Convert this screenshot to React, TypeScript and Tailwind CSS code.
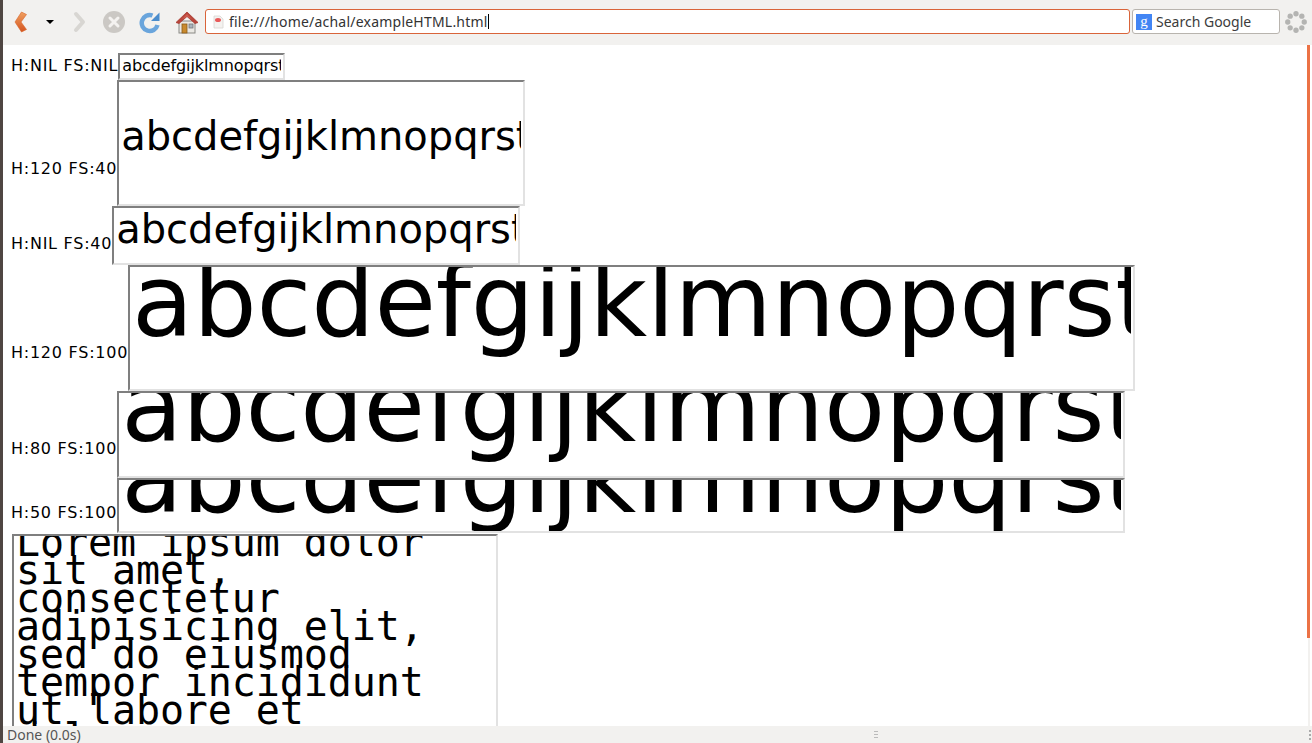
const ALPHA = "abcdefgijklmnopqrstuvwxyz";
const LOREM =
  "Lorem ipsum dolor sit amet, consectetur adipisicing elit, sed do eiusmod tempor incididunt ut labore et dolore magna aliqua.";

const boxBorder =
  "border-2 border-t-[#7f7f7f] border-l-[#7f7f7f] border-r-[#e2e2e2] border-b-[#e2e2e2] bg-white overflow-hidden";

function BackIcon() {
  return (
    <svg width="14" height="22" viewBox="0 0 14 22">
      <defs>
        <linearGradient id="back" x1="0" y1="0" x2="0" y2="1">
          <stop offset="0" stopColor="#f0a060" />
          <stop offset="1" stopColor="#d4541f" />
        </linearGradient>
      </defs>
      <path d="M7.5 1 L12.5 3.5 L7 11 L12.5 18.5 L7.5 21 L1 11 Z" fill="url(#back)" stroke="#d9642a" strokeWidth="0.6" strokeLinejoin="round" />
    </svg>
  );
}

function ForwardIcon() {
  return (
    <svg width="14" height="22" viewBox="0 0 14 22">
      <path d="M3 3 L10 11 L3 19" fill="none" stroke="#d8d6d2" strokeWidth="4" strokeLinejoin="round" strokeLinecap="round" />
    </svg>
  );
}

function StopIcon() {
  return (
    <svg width="24" height="24" viewBox="0 0 24 24">
      <circle cx="12" cy="12" r="11" fill="#cbc8c4" />
      <path d="M8 8 L16 16 M16 8 L8 16" stroke="#f4f2f0" strokeWidth="3" strokeLinecap="round" />
    </svg>
  );
}

function ReloadIcon() {
  return (
    <svg width="22" height="24" viewBox="0 0 22 24">
      <path d="M18.5 15 A8 8 0 1 1 13.5 5.5" fill="none" stroke="#6aa5dc" strokeWidth="4.5" />
      <path d="M12 11 L20.5 11 L20.5 2.5 Z" fill="#4a8ccc" />
    </svg>
  );
}

function HomeIcon() {
  return (
    <svg width="24" height="24" viewBox="0 0 24 24">
      <rect x="4" y="11" width="16" height="12" fill="#ebe9e4" stroke="#8a8a86" strokeWidth="1" />
      <path d="M1 12.5 L12 2 L23 12.5 L20 13.5 L12 6.5 L4 13.5 Z" fill="#b8453a" stroke="#a83a30" strokeWidth="0.8" strokeLinejoin="round" />
      <path d="M6 10 L12 4 L18 10 L12 6.5 Z" fill="#cf5c50" />
      <rect x="7" y="14" width="5" height="9" fill="#c98a2e" stroke="#8a5a1a" strokeWidth="0.8" />
      <rect x="14" y="14" width="4" height="4" fill="#a9b4bd" stroke="#77777a" strokeWidth="0.8" />
    </svg>
  );
}

function ThrobberIcon() {
  const dots = [0, 45, 90, 135, 180, 225, 270, 315];
  return (
    <svg width="22" height="22" viewBox="0 0 24 24">
      {dots.map((a) => (
        <circle
          key={a}
          cx={12 + 9 * Math.cos((a * Math.PI) / 180)}
          cy={12 + 9 * Math.sin((a * Math.PI) / 180)}
          r="2.9"
          fill="#b4b4b2"
        />
      ))}
    </svg>
  );
}

function Toolbar() {
  return (
    <div className="flex h-[45px] shrink-0 items-center bg-[#f2f1ef] pb-[2px] font-['Noto_Sans',sans-serif]">
      <div className="ml-[11px] flex w-[14px] justify-center"><BackIcon /></div>
      <div className="ml-[18px] h-0 w-0 border-x-[4px] border-t-[4px] border-x-transparent border-t-black" />
      <div className="ml-[19px] flex w-[14px] justify-center"><ForwardIcon /></div>
      <div className="ml-[15px]"><StopIcon /></div>
      <div className="ml-[13px]"><ReloadIcon /></div>
      <div className="ml-[14px]"><HomeIcon /></div>
      <div className="ml-[6px] flex h-[25px] w-[925px] items-center rounded-[3px] border border-[#d9643a] bg-white pl-[6px] text-[14px] tracking-[0.22px] text-[#333]">
        <svg width="12" height="14" viewBox="0 0 12 14" className="shrink-0">
          <path d="M2 1 H8 L11 4 V13 H2 Z" fill="#f4f2f0" stroke="#d8d6d2" strokeWidth="0.8" />
          <ellipse cx="6" cy="5" rx="3" ry="2" fill="#e85a5a" />
        </svg>
        <span className="ml-[5px]">file:///home/achal/exampleHTML.html</span>
        <span className="h-[15px] w-px bg-black" />
      </div>
      <div className="ml-[2px] flex h-[25px] w-[148px] items-center rounded-[3px] border border-[#b8b4ae] bg-white pl-[3px] text-[14px] text-[#3c3c3c]">
        <span className="flex h-[16px] w-[16px] items-center justify-center bg-[#4285f4] font-['Liberation_Serif',serif] text-[15px] leading-none text-white">g</span>
        <span className="ml-[4px]">Search Google</span>
      </div>
      <div className="ml-[5px]"><ThrobberIcon /></div>
    </div>
  );
}

function Row({
  label,
  labelBottom,
  box,
  input,
}: {
  label: string;
  labelBottom: string;
  box: string;
  input: string;
}) {
  return (
    <div className="flex items-end">
      <span className={`whitespace-nowrap text-[16px] leading-[19px] tracking-[0.75px] text-black font-['DejaVu_Sans',sans-serif] ${labelBottom}`}>{label}</span>
      <div className={`shrink-0 ${boxBorder} ${box}`}>
        <input readOnly value={ALPHA} className={`block w-full bg-transparent px-[2px] leading-[normal] text-black outline-none font-['DejaVu_Sans',sans-serif] ${input}`} />
      </div>
    </div>
  );
}

export default function App() {
  return (
    <div className="flex h-[743px] w-[1312px] overflow-hidden bg-white">
      <div className="w-[3px] shrink-0 bg-[#4f4642]" />
      <div className="flex min-w-0 flex-1 flex-col">
        <Toolbar />
        <div className="flex min-h-0 flex-1">
          <div className="min-w-0 flex-1 overflow-hidden pl-[8px] pt-[8px]">
            <Row label="H:NIL FS:NIL" labelBottom="mb-[5px]" box="w-[167px] h-[27px]" input="text-[16px] tracking-[-0.1px] mt-px" />
            <Row label="H:120 FS:40" labelBottom="mb-[28px]" box="w-[408px] h-[126px]" input="text-[40px] mt-[31px]" />
            <Row label="H:NIL FS:40" labelBottom="mb-[12px]" box="w-[408px] h-[59px]" input="text-[40px] -mt-[2px]" />
            <Row label="H:120 FS:100" labelBottom="mb-[29px]" box="w-[1007px] h-[126px]" input="text-[100px] tracking-[-0.2px] -mt-[24px]" />
            <Row label="H:80 FS:100" labelBottom="mb-[20px]" box="w-[1008px] h-[87px]" input="text-[100px] tracking-[-0.2px] -mt-[45px]" />
            <Row label="H:50 FS:100" labelBottom="mb-[11px]" box="w-[1008px] h-[55px]" input="text-[100px] tracking-[-0.2px] -mt-[61px]" />
            <div className={`mt-px ml-px h-[240px] w-[486px] ${boxBorder}`}>
              <textarea
                readOnly
                value={LOREM}
                className="-mt-[8px] block h-[260px] w-full resize-none overflow-hidden bg-transparent pl-[2px] pr-[40px] font-['DejaVu_Sans_Mono',monospace] text-[40px] leading-[28px] tracking-[-0.1px] text-black outline-none"
              />
            </div>
          </div>
          <div className="flex w-[7px] shrink-0 flex-col bg-white pl-[2px]">
            <div className="h-[593px] w-[3px] bg-[#ec7245]" />
            <div className="ml-px w-[2px] flex-1 bg-[#f2f1ef]" />
          </div>
        </div>
        <div className="flex h-[17px] shrink-0 items-center bg-[#f2f1ef] pl-[4px] font-['Noto_Sans',sans-serif] text-[14px] text-[#555]">
          <span className="w-[867px]">Done (0.0s)</span>
          <div className="flex w-[4px] flex-col gap-[2px]">
            <div className="h-px bg-[#bbb]" />
            <div className="h-px bg-[#bbb]" />
            <div className="h-px bg-[#bbb]" />
          </div>
          <div className="ml-auto mr-px flex w-[2px] flex-col gap-[2px]">
            <div className="h-[2px] bg-[#aaa]" />
            <div className="h-[2px] bg-[#aaa]" />
            <div className="h-[2px] bg-[#aaa]" />
          </div>
        </div>
      </div>
    </div>
  );
}
